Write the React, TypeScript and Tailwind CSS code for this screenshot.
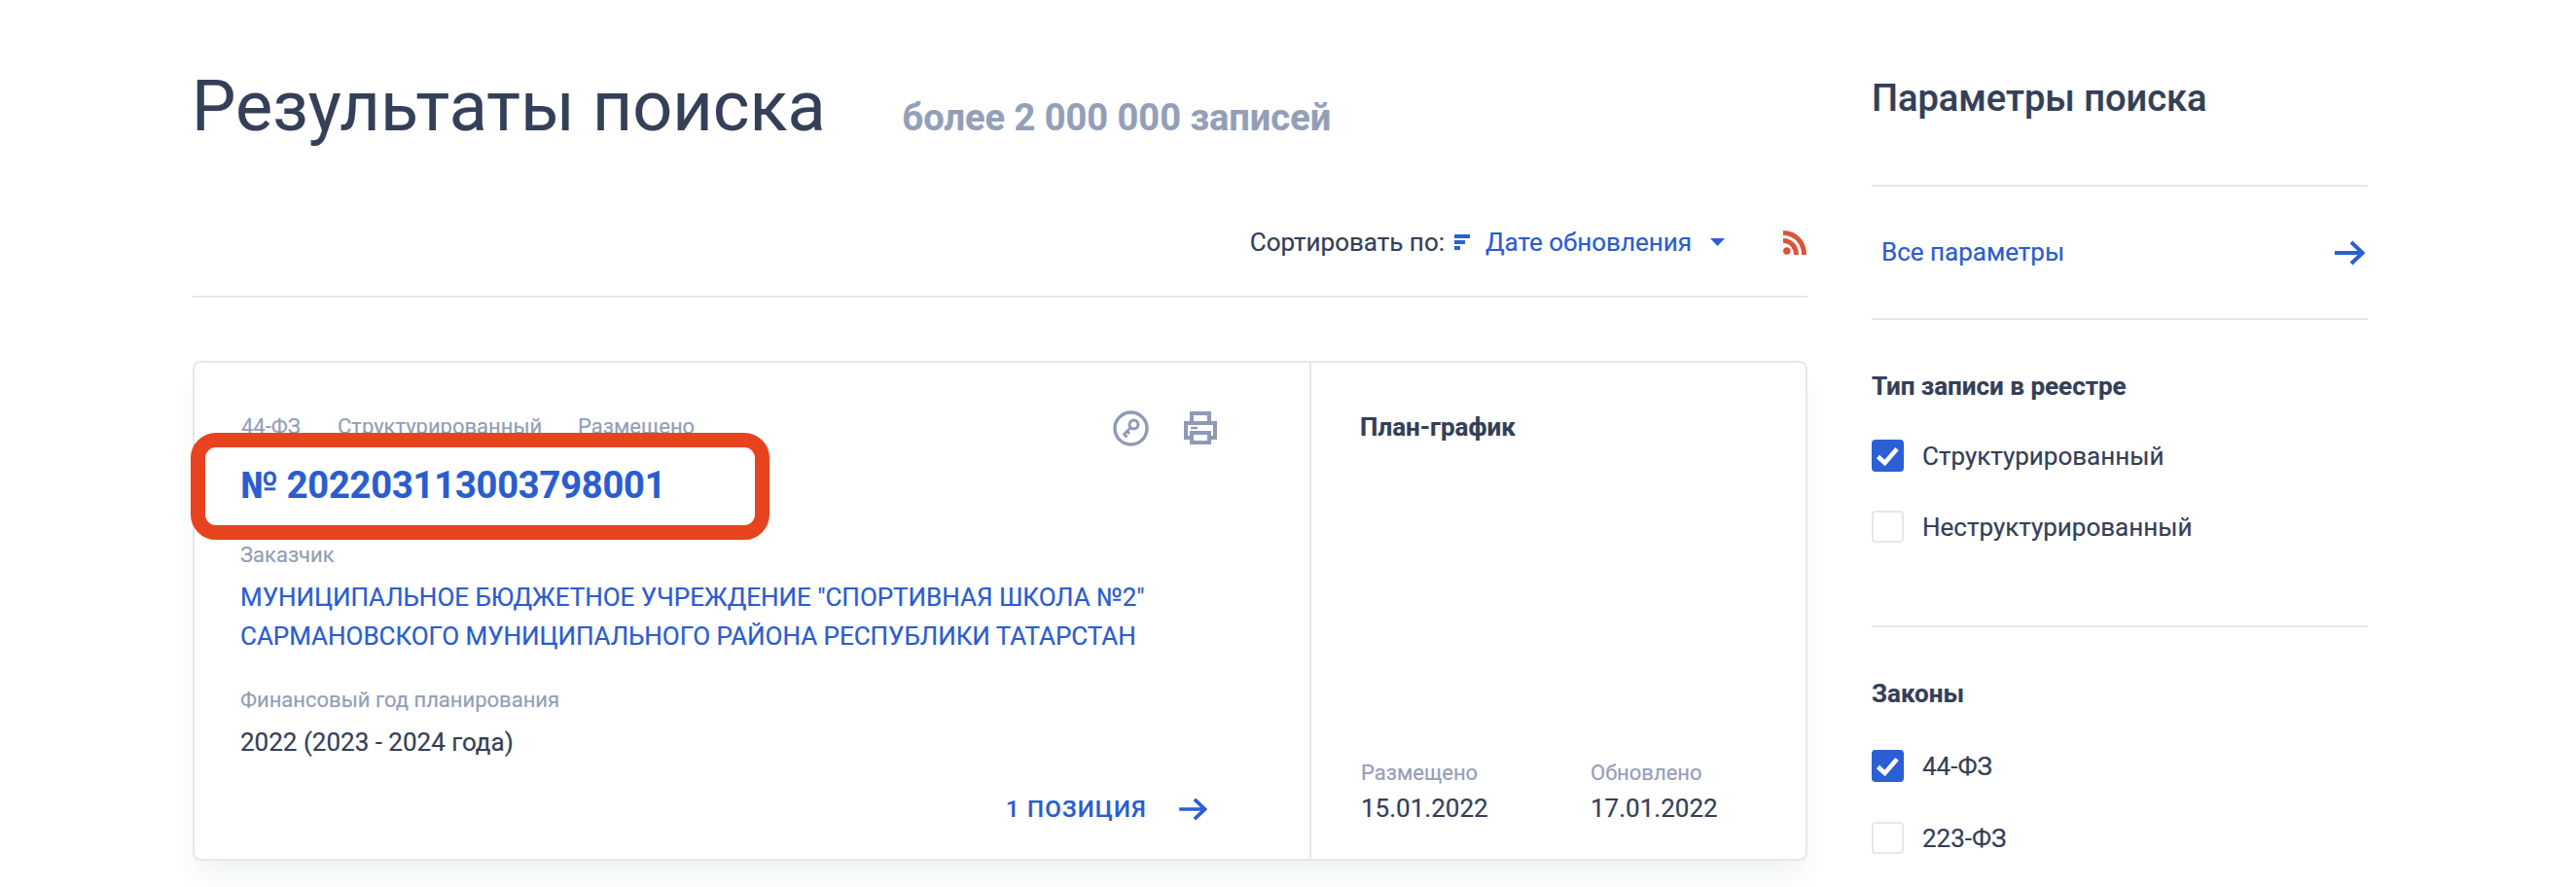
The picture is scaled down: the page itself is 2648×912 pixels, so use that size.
import React from "react";

const Check = ({ on, label }: { on?: boolean; label: string }) => (
  <div className="flex items-center h-[33px] gap-[19px]">
    {on ? (
      <span className="w-[33px] h-[33px] rounded-[4px] bg-[#2b5fd6] flex items-center justify-center">
        <svg width="25" height="22" viewBox="0 0 25 22" fill="none">
          <path d="M2.5 11.5L9.5 18L22 3.5" stroke="#fff" strokeWidth="4.6" />
        </svg>
      </span>
    ) : (
      <span className="w-[33px] h-[33px] rounded-[4px] border-2 border-[#e4e7ee] bg-white" />
    )}
    <span className="text-[26px] leading-[33px] text-[#343f58] relative top-[1px]">{label}</span>
  </div>
);

const Arrow = ({ w, h }: { w: number; h: number }) => (
  <svg width={w} height={h} viewBox="0 0 31 26" fill="none">
    <path d="M0 13H28M17 2L28.5 13L17 24" stroke="#2b5fd6" strokeWidth="4" />
  </svg>
);

export default function App() {
  return (
    <div className="relative w-[2648px] h-[912px] overflow-hidden bg-white flex font-['Roboto',sans-serif] [-webkit-text-stroke:0.2px]">
      <main className="ml-[198px] w-[1660px] shrink-0">
        <div className="flex items-baseline pt-[68px] h-[198px]">
          <h1 className="text-[72px] leading-[84px] text-[#343f58] font-normal -ml-[1px]">Результаты поиска</h1>
          <span className="ml-[79px] text-[38px] font-bold text-[#939fb8]">более 2 000 000 записей</span>
        </div>
        <div className="h-[108px] border-b-2 border-[#e4e7ee] flex justify-end items-start">
          <div className="flex items-center h-[54px] mt-[24px]">
            <span className="text-[26px] text-[#343f58]">Сортировать по:</span>
            <svg className="ml-[10px]" width="16" height="16" viewBox="0 0 16 16" fill="#2b5fd6">
              <rect x="0" y="0" width="16" height="4" />
              <rect x="0" y="6" width="11" height="4" />
              <rect x="0" y="12" width="6" height="4" />
            </svg>
            <span className="ml-[16px] text-[26px] text-[#2a5dcf]">Дате обновления</span>
            <svg className="ml-[19px]" width="15" height="8" viewBox="0 0 15 8" fill="#2b5fd6">
              <path d="M0 0H15L7.5 8Z" />
            </svg>
            <svg className="ml-[60px] mr-[1px]" width="24" height="25" viewBox="0 0 24 25" fill="none">
              <circle cx="3.8" cy="21" r="3.8" fill="#d9553a" />
              <path d="M0 10.5C7.5 10.5 13.5 16.5 13.5 25" stroke="#d9553a" strokeWidth="5" />
              <path d="M0 2.5C12.5 2.5 21.5 12 21.5 25" stroke="#d9553a" strokeWidth="5" />
            </svg>
          </div>
        </div>

        <div className="mt-[65px] h-[514px] flex rounded-[8px] border-2 border-[#e4e7ee] shadow-[0_18px_28px_-6px_rgba(52,63,88,0.08)] bg-white">
          <div className="w-[1148px] shrink-0 border-r-2 border-[#e4e7ee] pl-[47px] flex flex-col">
            <div className="flex items-center justify-between h-[50px] mt-[41px] pr-[95px]">
              <div className="flex text-[22px] leading-[26px] text-[#939fb8] self-start mt-[12px]">
                <span className="w-[99px] ml-[1px]">44-ФЗ</span>
                <span className="w-[247px]">Структурированный</span>
                <span>Размещено</span>
              </div>
              <div className="flex items-center gap-[36px] mt-[2px]">
                <svg width="37" height="37" viewBox="0 0 37 37" fill="none">
                  <circle cx="18.5" cy="18.5" r="16.5" stroke="#8e9ab5" strokeWidth="3.4" />
                  <circle cx="21.5" cy="14.5" r="4.4" stroke="#8e9ab5" strokeWidth="3" />
                  <path d="M18 18L10.5 25.5M11.5 24.5L14.5 27.5M14.5 21.5L17 24" stroke="#8e9ab5" strokeWidth="2.8" />
                </svg>
                <svg width="34" height="34" viewBox="0 0 34 34" fill="none" stroke="#8e9ab5" strokeWidth="4">
                  <path d="M8 12V2H26V12" />
                  <path d="M8 27H2V12H32V27H26" />
                  <path d="M8 22H26V32H8Z" />
                  <path d="M7 17H14" strokeWidth="2.4" />
                </svg>
              </div>
            </div>
            <div className="mt-[13px] text-[38px] leading-[44px] font-bold text-[#2a5dcf] tracking-[-0.15px]">№ 202203113003798001</div>
            <div className="mt-[36px] text-[22px] leading-[28px] text-[#939fb8]">Заказчик</div>
            <div className="mt-[9px] text-[26px] leading-[40px] text-[#2a5dcf] tracking-[-0.03px]">
              МУНИЦИПАЛЬНОЕ БЮДЖЕТНОЕ УЧРЕЖДЕНИЕ "СПОРТИВНАЯ ШКОЛА №2"
              <br />
              САРМАНОВСКОГО МУНИЦИПАЛЬНОГО РАЙОНА РЕСПУБЛИКИ ТАТАРСТАН
            </div>
            <div className="mt-[32px] text-[22px] leading-[28px] text-[#939fb8]">Финансовый год планирования</div>
            <div className="mt-[12px] text-[26px] leading-[34px] text-[#343f58]">2022 (2023 - 2024 года)</div>
            <div className="mt-auto mb-[33px] flex items-center justify-end pr-[105px]">
              <span className="text-[24px] font-medium tracking-[1.2px] text-[#2a5dcf] mr-[33px]">1 ПОЗИЦИЯ</span>
              <Arrow w={29} h={24} />
            </div>
          </div>
          <div className="flex-1 pl-[50px] flex flex-col">
            <div className="mt-[48px] text-[26px] leading-[36px] font-bold text-[#343f58]">План-график</div>
            <div className="mt-auto mb-[35px] flex ml-[1px]">
              <div className="w-[236px]">
                <div className="text-[22px] leading-[28px] text-[#939fb8]">Размещено</div>
                <div className="mt-[5px] text-[26px] leading-[34px] text-[#343f58]">15.01.2022</div>
              </div>
              <div>
                <div className="text-[22px] leading-[28px] text-[#939fb8]">Обновлено</div>
                <div className="mt-[5px] text-[26px] leading-[34px] text-[#343f58]">17.01.2022</div>
              </div>
            </div>
          </div>
        </div>
      </main>

      <aside className="ml-[66px] w-[510px] shrink-0">
        <div className="h-[192px] border-b-2 border-[#e4e7ee] pt-[79px] text-[38px] leading-[44px] font-medium text-[#343f58]">
          Параметры поиска
        </div>
        <div className="h-[137px] border-b-2 border-[#e4e7ee] pl-[10px] pr-[3px] flex items-center justify-between">
          <span className="text-[26px] text-[#2a5dcf]">Все параметры</span>
          <Arrow w={31} h={26} />
        </div>
        <div className="h-[316px] border-b-2 border-[#e4e7ee]">
          <div className="pt-[50px] text-[26px] leading-[36px] font-bold text-[#343f58]">Тип записи в реестре</div>
          <div className="mt-[37px] flex flex-col gap-[40px]">
            <Check on label="Структурированный" />
            <Check label="Неструктурированный" />
          </div>
        </div>
        <div className="pt-[50px] text-[26px] leading-[36px] font-bold text-[#343f58]">Законы</div>
        <div className="mt-[40px] flex flex-col gap-[41px]">
          <Check on label="44-ФЗ" />
          <Check label="223-ФЗ" />
        </div>
      </aside>

      <div className="absolute left-[196px] top-[445px] w-[595px] h-[110px] rounded-[26px] border-[15px] border-[#e8431f]" />
    </div>
  );
}
